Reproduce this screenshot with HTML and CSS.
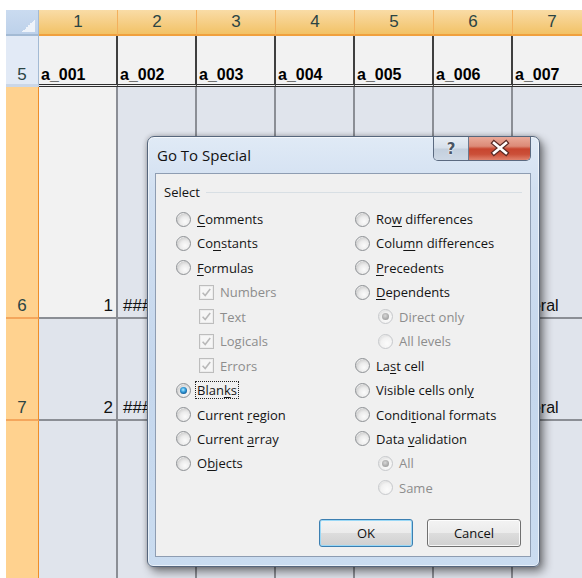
FILE: index.html
```html
<!DOCTYPE html>
<html>
<head>
<meta charset="utf-8">
<title>Go To Special</title>
<link rel="stylesheet" href="styles.css">
</head>
<body>
<div class="sheet">
  <div class="corner"></div>
  <div class="ch">1</div><div class="ch">2</div><div class="ch">3</div><div class="ch">4</div><div class="ch">5</div><div class="ch">6</div><div class="ch">7</div>

  <div class="rh rh-name">5</div>
  <div class="hd">a_001</div><div class="hd">a_002</div><div class="hd">a_003</div><div class="hd">a_004</div><div class="hd">a_005</div><div class="hd">a_006</div><div class="hd">a_007</div>

  <div class="rh">6</div>
  <div class="c c-active num">1</div>
  <div class="c hash">#######</div>
  <div class="c"></div><div class="c"></div><div class="c"></div><div class="c"></div>
  <div class="c txt">Literal</div>

  <div class="rh">7</div>
  <div class="c num">2</div>
  <div class="c hash">#######</div>
  <div class="c"></div><div class="c"></div><div class="c"></div><div class="c"></div>
  <div class="c txt">Literal</div>

  <div class="rh"></div>
  <div class="c"></div><div class="c"></div><div class="c"></div><div class="c"></div><div class="c"></div><div class="c"></div><div class="c"></div>
</div>

<div class="dialog">
  <div class="titlebar">
    <span class="title">Go To Special</span>
    <div class="caption">
      <span class="cap-help">?</span>
      <span class="cap-close">
        <svg width="61" height="23" viewBox="0 0 61 23">
          <path d="M25 6 L37 16 M37 6 L25 16" stroke="#5a2a24" stroke-width="5" stroke-linecap="square" fill="none"/>
          <path d="M25 6 L37 16 M37 6 L25 16" stroke="#ffffff" stroke-width="2.6" stroke-linecap="square" fill="none"/>
        </svg>
      </span>
    </div>
  </div>
  <div class="client">
    <div class="group-head"><span>Select</span><span class="rule"></span></div>
    <div class="options">
      <div class="col">
        <div class="opt"><span class="radio"></span><span class="lbl"><u>C</u>omments</span></div>
        <div class="opt"><span class="radio"></span><span class="lbl">Co<u>n</u>stants</span></div>
        <div class="opt"><span class="radio"></span><span class="lbl"><u>F</u>ormulas</span></div>
        <div class="opt sub off"><span class="check"><svg width="13" height="13" viewBox="0 0 13 13"><path d="M2.6 6.8 L5.2 9.6 L10.2 3" stroke="#b9b9b9" stroke-width="1.6" fill="none"/></svg></span><span class="lbl">Numbers</span></div>
        <div class="opt sub off"><span class="check"><svg width="13" height="13" viewBox="0 0 13 13"><path d="M2.6 6.8 L5.2 9.6 L10.2 3" stroke="#b9b9b9" stroke-width="1.6" fill="none"/></svg></span><span class="lbl">Text</span></div>
        <div class="opt sub off"><span class="check"><svg width="13" height="13" viewBox="0 0 13 13"><path d="M2.6 6.8 L5.2 9.6 L10.2 3" stroke="#b9b9b9" stroke-width="1.6" fill="none"/></svg></span><span class="lbl">Logicals</span></div>
        <div class="opt sub off"><span class="check"><svg width="13" height="13" viewBox="0 0 13 13"><path d="M2.6 6.8 L5.2 9.6 L10.2 3" stroke="#b9b9b9" stroke-width="1.6" fill="none"/></svg></span><span class="lbl">Errors</span></div>
        <div class="opt"><span class="radio on"></span><span class="lbl focus">Blan<u>k</u>s</span></div>
        <div class="opt"><span class="radio"></span><span class="lbl">Current <u>r</u>egion</span></div>
        <div class="opt"><span class="radio"></span><span class="lbl">Current <u>a</u>rray</span></div>
        <div class="opt"><span class="radio"></span><span class="lbl">O<u>b</u>jects</span></div>
      </div>
      <div class="col">
        <div class="opt"><span class="radio"></span><span class="lbl">Ro<u>w</u> differences</span></div>
        <div class="opt"><span class="radio"></span><span class="lbl">Colu<u>m</u>n differences</span></div>
        <div class="opt"><span class="radio"></span><span class="lbl"><u>P</u>recedents</span></div>
        <div class="opt"><span class="radio"></span><span class="lbl"><u>D</u>ependents</span></div>
        <div class="opt sub off"><span class="radio on"></span><span class="lbl">Direct only</span></div>
        <div class="opt sub off"><span class="radio"></span><span class="lbl">All levels</span></div>
        <div class="opt"><span class="radio"></span><span class="lbl">La<u>s</u>t cell</span></div>
        <div class="opt"><span class="radio"></span><span class="lbl">Visible cells onl<u>y</u></span></div>
        <div class="opt"><span class="radio"></span><span class="lbl">Condi<u>t</u>ional formats</span></div>
        <div class="opt"><span class="radio"></span><span class="lbl">Data <u>v</u>alidation</span></div>
        <div class="opt sub off"><span class="radio on"></span><span class="lbl">All</span></div>
        <div class="opt sub off"><span class="radio"></span><span class="lbl">Same</span></div>
      </div>
    </div>
    <div class="buttons">
      <span class="btn btn-default">OK</span>
      <span class="btn">Cancel</span>
    </div>
  </div>
</div>
</body>
</html>
```
FILE: styles.css
```css
html, body {
  margin: 0;
  padding: 0;
}

body {
  width: 582px;
  height: 578px;
  overflow: hidden;
  background: #ffffff;
  position: relative;
  font-family: "Liberation Sans", Arial, sans-serif;
}

/* ---------- worksheet ---------- */
.sheet {
  display: grid;
  grid-template-columns: 33px repeat(7, 79px);
  grid-template-rows: 26px 51px 232px 102px 170px;
  margin: 10px 0 0 6px;
  width: max-content;
}

.sheet > div {
  box-sizing: border-box;
  overflow: hidden;
  white-space: nowrap;
}

.corner {
  position: relative;
  background: linear-gradient(#cadbf0, #bdd1ea);
  border-right: 1px solid #a3bad4;
  border-bottom: 2px solid #a3bad4;
}

.corner::after {
  content: "";
  position: absolute;
  right: 3px;
  bottom: 2px;
  width: 13px;
  height: 13px;
  background: linear-gradient(135deg, transparent 50%, #eef3fa 50%);
}

.ch {
  display: flex;
  align-items: center;
  justify-content: center;
  background: linear-gradient(#f9dca6, #f6d08a 45%, #f2c266);
  border-right: 1px solid #f3b05c;
  border-bottom: 2px solid #f0a03e;
  font-size: 17px;
  color: #2b4444;
}

.rh {
  display: flex;
  align-items: flex-end;
  justify-content: center;
  padding-bottom: 2px;
  line-height: 18px;
  background: #ffd28f;
  border-right: 1px solid #ee8e2a;
  border-bottom: 2px solid #f4a65c;
  font-size: 17px;
  color: #2b4444;
}

.rh-name {
  background: #e2eaf6;
  border-right: 1px solid #a3bad4;
  border-bottom: 3px solid #cbd7e8;
  padding-bottom: 0;
}

.hd {
  display: flex;
  align-items: flex-end;
  padding-left: 2px;
  line-height: 18px;
  background: #f2f2f2;
  border-right: 2px solid #3f3f3f;
  border-bottom: 3px double #2e2e2e;
  font-size: 16px;
  font-weight: bold;
  color: #000;
}

.c {
  display: flex;
  align-items: flex-end;
  padding-bottom: 2px;
  line-height: 18px;
  background: #e0e4ec;
  border-right: 2px solid #8b8e95;
  border-bottom: 2px solid #8b8e95;
  font-size: 17px;
  color: #111;
}

.c-active {
  background: #f2f2f2;
}

.num {
  justify-content: flex-end;
  padding-right: 3px;
}

.hash {
  padding-left: 5px;
}

.txt {
  padding-left: 2px;
  font-size: 16px;
}

/* ---------- dialog window ---------- */
.dialog {
  position: absolute;
  left: 147px;
  top: 136px;
  width: 393px;
  height: 431px;
  box-sizing: border-box;
  display: flex;
  flex-direction: column;
  border: 1px solid #56667c;
  border-radius: 7px 7px 6px 6px;
  background: linear-gradient(#e0eaf6, #d2e0f1 12%, #c5d7ed 55%, #cadcf0);
  box-shadow: 4px 5px 10px rgba(0, 0, 0, 0.45), 0 0 5px rgba(0, 0, 0, 0.25), inset 0 0 0 1px rgba(255, 255, 255, 0.6);
  font-family: "Open Sans", "Noto Sans", sans-serif;
  color: #141414;
}

.titlebar {
  height: 36px;
  flex: none;
  display: flex;
  justify-content: space-between;
  align-items: flex-start;
}

.title {
  padding: 9px 0 0 9px;
  line-height: 18px;
  font-size: 15px;
  color: #111;
}

.caption {
  display: flex;
  margin-right: 8px;
  height: 23px;
  border: 1px solid #5b6a80;
  border-top: none;
  border-radius: 0 0 5px 5px;
  overflow: hidden;
}

.cap-help {
  width: 34px;
  display: flex;
  align-items: center;
  justify-content: center;
  background: linear-gradient(#e7edf4, #d6dfea 48%, #c3cfdd 52%, #cdd8e5);
  border-right: 1px solid #6b7a8e;
  font-family: "DejaVu Sans", sans-serif;
  font-weight: bold;
  font-size: 15px;
  color: #4a5565;
  text-shadow: 0 0 2px #fff, 0 0 1px #fff;
}

.cap-close {
  width: 61px;
  display: flex;
  background: linear-gradient(#eaa999, #dc8a77 40%, #c8452f 52%, #cb4f38 75%, #e0826d);
}

.client {
  flex: 1;
  margin: 0 8px 9px 7px;
  display: flex;
  flex-direction: column;
  background: #f0f0f0;
  border: 1px solid #8e9db2;
  font-size: 13px;
}

.group-head {
  display: flex;
  align-items: center;
  height: 20px;
  margin: 8px 8px 0 8px;
}

.rule {
  flex: 1;
  height: 1px;
  margin-left: 6px;
  background: #d8dfe4;
}

.options {
  display: flex;
  margin: 4.8px 0 0 20px;
}

.col {
  display: flex;
  flex-direction: column;
}

.col:first-child {
  width: 179px;
}

.opt {
  height: 24.45px;
  display: flex;
  align-items: center;
  gap: 6px;
  white-space: nowrap;
}

.opt.sub {
  padding-left: 23px;
}

.opt.off {
  color: #8d8d8d;
}

.lbl u {
  text-underline-offset: 2px;
}

.focus {
  margin-left: -2px;
  padding: 0 1px;
  line-height: 16px;
  border: 1px dotted #222;
}

.radio {
  position: relative;
  flex: none;
  width: 15px;
  height: 15px;
  box-sizing: border-box;
  border-radius: 50%;
  border: 1px solid #8e9195;
  background: radial-gradient(circle at 62% 66%, #fbfbfb 0%, #ececec 40%, #d2d2d2 68%, #f1f1f1 72%);
}

.radio.on::after {
  content: "";
  position: absolute;
  left: 3px;
  top: 3px;
  width: 7px;
  height: 7px;
  border-radius: 50%;
  background: radial-gradient(circle at 45% 40%, #b4ecff 0%, #3fa6e2 35%, #13629f 70%, #0b4780 100%);
}

.off .radio {
  border-color: #c7c9cc;
  background: radial-gradient(circle at 62% 66%, #fbfbfb 0%, #f2f2f2 50%, #e4e4e4 70%, #f5f5f5 74%);
}

.off .radio.on::after {
  background: radial-gradient(circle at 45% 40%, #d8d8d8 0%, #a9a9a9 60%, #8f8f8f 100%);
}

.check {
  flex: none;
  width: 15px;
  height: 15px;
  box-sizing: border-box;
  display: flex;
  align-items: center;
  justify-content: center;
  border: 1px solid #bdbdbd;
  background: #f6f6f6;
  box-shadow: inset 0 0 0 1px #ececec;
}

.buttons {
  margin-top: auto;
  display: flex;
  justify-content: flex-end;
  gap: 14px;
  padding: 0 9px 9px 0;
}

.btn {
  width: 94px;
  height: 28px;
  box-sizing: border-box;
  display: flex;
  align-items: center;
  justify-content: center;
  border: 1px solid #707070;
  border-radius: 3px;
  background: linear-gradient(#f3f3f3, #ebebeb 50%, #dddddd 50%, #d0d0d0);
  box-shadow: inset 0 0 0 1px rgba(255, 255, 255, 0.8);
  color: #111;
}

.btn-default {
  border-color: #3c7fb1;
  box-shadow: inset 0 0 0 1px #9ad8f6;
}
```
